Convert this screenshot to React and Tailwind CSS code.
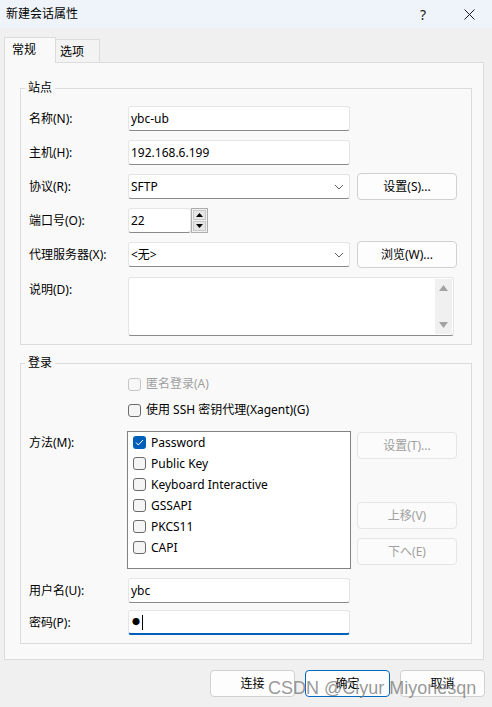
import React from "react";

const font = "font-['Noto_Sans','Noto_Sans_CJK_SC',sans-serif]";

function Chevron() {
  return (
    <svg width="10" height="6" viewBox="0 0 10 6" className="shrink-0">
      <polyline points="1,1 5,5 9,1" fill="none" stroke="#5f5f5f" strokeWidth="1" />
    </svg>
  );
}

function Input({ value, focused, className = "w-[222px]" }) {
  return (
    <div
      className={
        "h-[25px] bg-white border border-[#e5e5e5] rounded-[3px] px-[2px] flex items-center text-[12px] text-black " +
        (focused ? "border-b-2 border-b-[#005fb8] " : "border-b-[#8a8a8a] ") +
        className
      }
    >
      {value}
    </div>
  );
}

function Select({ value }) {
  return (
    <div className="h-[25px] w-[222px] bg-white border border-[#e5e5e5] border-b-[#8a8a8a] rounded-[3px] pl-[2px] pr-[5px] flex items-center justify-between text-[12px]">
      <span>{value}</span>
      <Chevron />
    </div>
  );
}

function Button({ children, disabled, primary, className = "w-[100px]" }) {
  return (
    <div
      className={
        "h-[27px] rounded-[4px] border flex items-center justify-center text-[12px] shrink-0 " +
        (disabled
          ? "bg-[#fbfbfb] border-[#e5e5e5] text-[#a0a0a0] "
          : primary
          ? "bg-[#fdfdfd] border-[#0067c0] text-black "
          : "bg-[#fdfdfd] border-[#d0d0d0] text-black ") +
        className
      }
    >
      {children}
    </div>
  );
}

function Check({ checked, disabled }) {
  if (checked) {
    return (
      <span className="w-[13px] h-[13px] rounded-[3px] bg-[#005fb8] flex items-center justify-center shrink-0">
        <svg width="9" height="7" viewBox="0 0 9 7">
          <polyline points="1,3.5 3.3,6 8,1" fill="none" stroke="white" strokeWidth="1" />
        </svg>
      </span>
    );
  }
  return (
    <span
      className={
        "w-[13px] h-[13px] rounded-[3px] border shrink-0 " +
        (disabled ? "border-[#c6c6c6] bg-[#f7f7f7]" : "border-[#6b6b6b] bg-[#f5f5f5]")
      }
    />
  );
}

function Row({ label, children, className = "" }) {
  return (
    <div className={"flex items-center h-[25px] " + className}>
      <span className="w-[99px] shrink-0 text-[12px]">{label}</span>
      {children}
    </div>
  );
}

function Spinner() {
  return (
    <div className="w-[17px] h-[25px] border border-[#adadad] bg-[#f0f0f0] flex flex-col p-px gap-px">
      <div className="flex-1 bg-[#e5e5e5] border border-[#c9c9c9] flex items-center justify-center">
        <svg width="7" height="4" viewBox="0 0 7 4"><polygon points="0,4 7,4 3.5,0" fill="#000" /></svg>
      </div>
      <div className="flex-1 bg-[#e5e5e5] border border-[#c9c9c9] flex items-center justify-center">
        <svg width="7" height="4" viewBox="0 0 7 4"><polygon points="0,0 7,0 3.5,4" fill="#000" /></svg>
      </div>
    </div>
  );
}

const methods = [
  { name: "Password", checked: true },
  { name: "Public Key" },
  { name: "Keyboard Interactive" },
  { name: "GSSAPI" },
  { name: "PKCS11" },
  { name: "CAPI" },
];

export default function App() {
  return (
    <div className={"relative w-[492px] h-[707px] bg-[#f0f0f0] text-black overflow-hidden " + font}>
      {/* title bar */}
      <div className="h-[28px] bg-[#eef4f9] flex items-center pl-[6px] text-[12px]">
        <span className="flex-1">新建会话属性</span>
        <span className="text-[14px] mr-[38px] text-[#1a1a1a]">?</span>
        <svg width="11" height="11" viewBox="0 0 11 11" className="mr-[17px]">
          <line x1="0.5" y1="0.5" x2="10.5" y2="10.5" stroke="#1a1a1a" strokeWidth="1" />
          <line x1="10.5" y1="0.5" x2="0.5" y2="10.5" stroke="#1a1a1a" strokeWidth="1" />
        </svg>
      </div>

      {/* tabs */}
      <div className="flex items-end ml-[4px] mt-[9px] h-[25px] relative z-10">
        <div className="w-[52px] bg-[#f9f9f9] border border-b-0 border-[#dcdcdc] text-[12px] pl-[7px] pt-[3px] -mb-px h-[26px]">
          常规
        </div>
        <div className="w-[44px] h-[23px] bg-[#f3f3f3] border border-l-0 border-b-0 border-[#dcdcdc] text-[12px] pl-[4px] pt-[3px]">
          选项
        </div>
      </div>

      {/* panel */}
      <div className="ml-[4px] w-[480px] h-[598px] bg-[#f9f9f9] border border-[#dcdcdc] pt-[17px]">
        <fieldset className="ml-[15px] w-[452px] border border-[#dcdcdc] pl-[8px] pt-[10px] pb-[8px]">
          <legend className="-ml-[4px] px-[3px] text-[12px] leading-[16px]">站点</legend>
          <div className="flex flex-col gap-[9px]">
            <Row label="名称(N):">
              <Input value="ybc-ub" />
            </Row>
            <Row label="主机(H):">
              <Input value="192.168.6.199" />
            </Row>
            <Row label="协议(R):">
              <Select value="SFTP" />
              <Button className="w-[100px] ml-[7px]">设置(S)...</Button>
            </Row>
            <Row label="端口号(O):">
              <Input value="22" className="w-[63px]" />
              <Spinner />
            </Row>
            <Row label="代理服务器(X):">
              <Select value="<无>" />
              <Button className="w-[100px] ml-[7px]">浏览(W)...</Button>
            </Row>
            <div className="flex items-start mt-px">
              <span className="w-[99px] shrink-0 text-[12px] pt-[4px]">说明(D):</span>
              <div className="w-[326px] h-[59px] bg-white border border-[#e5e5e5] border-b-[#8a8a8a] rounded-[3px] flex justify-end p-px">
                <div className="w-[17px] bg-[#f0f0f0] flex flex-col items-center justify-between py-[6px]">
                  <svg width="9" height="6" viewBox="0 0 9 6"><polygon points="0,6 9,6 4.5,0" fill="#a3a3a3" /></svg>
                  <svg width="9" height="6" viewBox="0 0 9 6"><polygon points="0,0 9,0 4.5,6" fill="#a3a3a3" /></svg>
                </div>
              </div>
            </div>
          </div>
        </fieldset>

        <fieldset className="ml-[15px] mt-[10px] w-[452px] border border-[#dcdcdc] pl-[8px] pt-[3px] pb-[8px]">
          <legend className="-ml-[4px] px-[3px] text-[12px] leading-[16px]">登录</legend>
          <div className="flex items-center gap-[5px] h-[20px] pl-[99px] text-[12px] text-[#a0a0a0]">
            <Check disabled />
            <span>匿名登录(A)</span>
          </div>
          <div className="flex items-center gap-[5px] h-[20px] pl-[99px] mt-[6px] text-[12px]">
            <Check />
            <span>使用 SSH 密钥代理(Xagent)(G)</span>
          </div>
          <div className="flex mt-[11px]">
            <span className="w-[98px] shrink-0 text-[12px] pt-[3px]">方法(M):</span>
            <div className="w-[224px] h-[138px] bg-white border border-[#828282] pl-[5px]">
              {methods.map((m) => (
                <div key={m.name} className="h-[21px] flex items-center gap-[5px] text-[12px]">
                  <Check checked={m.checked} />
                  <span>{m.name}</span>
                </div>
              ))}
            </div>
            <div className="ml-[6px] flex flex-col">
              <Button disabled className="w-[100px] mt-[1px]">设置(T)...</Button>
              <Button disabled className="w-[100px] mt-[43px]">上移(V)</Button>
              <Button disabled className="w-[100px] mt-[9px]">下へ(E)</Button>
            </div>
          </div>
          <Row label="用户名(U):" className="mt-[9px]">
            <Input value="ybc" />
          </Row>
          <Row label="密码(P):" className="mt-[7px]">
            <Input
              focused
              value={
                <span className="flex items-center">
                  <span className="text-[8px] leading-none ml-[1px]">●</span>
                  <span className="w-px h-[15px] bg-black ml-[2px]" />
                </span>
              }
            />
          </Row>
        </fieldset>
      </div>

      {/* footer buttons */}
      <div className="flex justify-end gap-[10px] mt-[10px] mr-[7px]">
        <Button className="w-[85px]">连接</Button>
        <Button primary className="w-[85px]">确定</Button>
        <Button className="w-[85px]">取消</Button>
      </div>

      {/* watermark */}
      <div className="absolute left-[268px] top-[675px] text-[18px] font-['Liberation_Sans',sans-serif] text-[#7d7d7d]/80 pointer-events-none whitespace-nowrap">
        CSDN @Ciyur Miyoriesqn
      </div>
    </div>
  );
}
